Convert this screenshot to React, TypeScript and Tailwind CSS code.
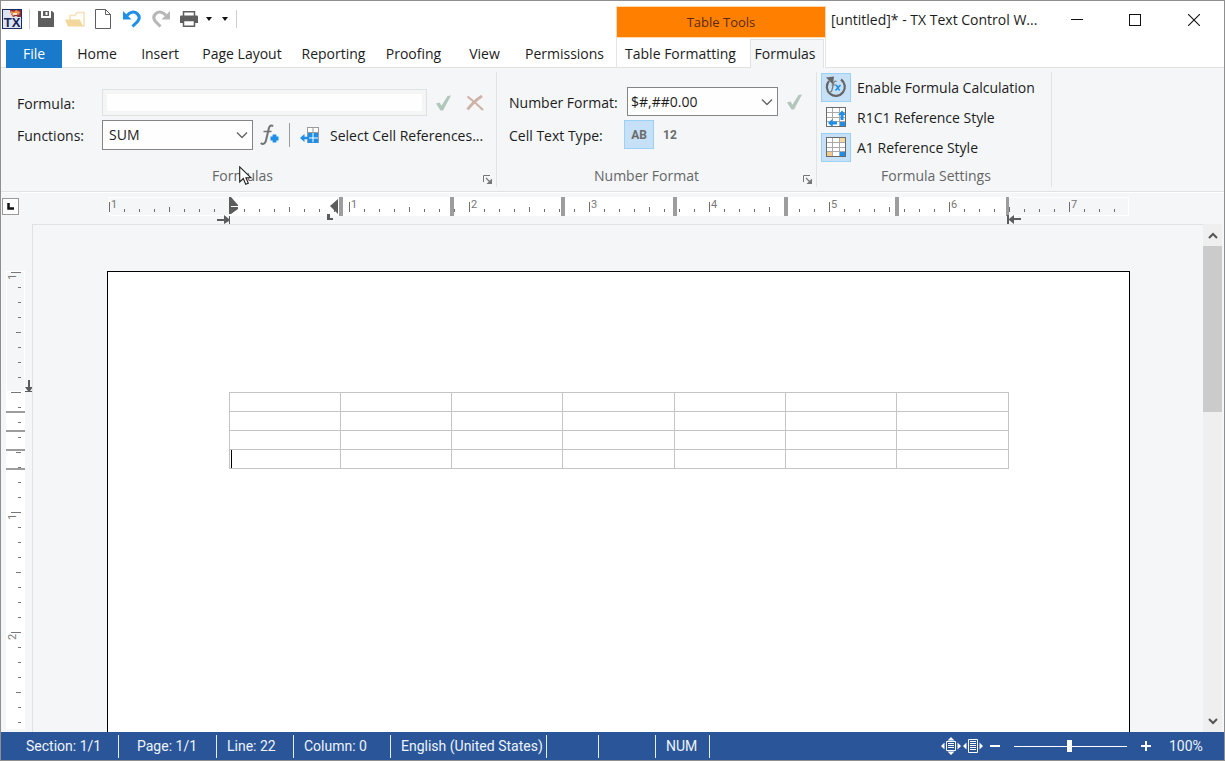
import type { ReactNode } from "react";

const INCH = 120;
const STEP = 15;

const TABS = [
  { label: "Home", width: "w-[62px]" },
  { label: "Insert", width: "w-[64px]" },
  { label: "Page Layout", width: "w-[100px]" },
  { label: "Reporting", width: "w-[83px]" },
  { label: "Proofing", width: "w-[77px]" },
  { label: "View", width: "w-[65px]" },
  { label: "Permissions", width: "w-[95px]" },
];

function AppLogo() {
  return (
    <svg width="20" height="20" viewBox="0 0 20 20" aria-label="TX">
      <rect x="0.5" y="0.5" width="19" height="19" fill="#dfe3ee" stroke="#1d2d63" />
      <path d="M8 1h11v7h-3l-2-1-3 1-2-3z" fill="#8b2f3a" />
      <path d="M9 2l3 1 2-2 4 2-1 3-3-1-3 2-2-2z" fill="#f0934a" />
      <path d="M11 4h4v2h-4z" fill="#fbe3c8" />
      <text x="10" y="18" textAnchor="middle" fontFamily="Liberation Sans, sans-serif" fontSize="13" fontWeight="700" fill="#14245c">TX</text>
    </svg>
  );
}

function SaveIcon() {
  return (
    <svg width="16" height="16" viewBox="0 0 16 16">
      <path d="M0 0h3v7h10V0h1l2 2v14H0z" fill="#5e5e5e" />
      <path d="M5 0h6v5H5z" fill="#5e5e5e" />
      <path d="M7.500 1h2v3h-2z" fill="#fff" />
      <path d="M0 7h16v9H0z" fill="#5e5e5e" />
    </svg>
  );
}

function FolderIcon() {
  return (
    <svg width="20" height="16" viewBox="0 0 20 16">
      <path d="M5 12V4.500h5l2-3h7V15h-2" fill="#fff" stroke="#f5e1ba" strokeWidth="1.600" />
      <path d="M0 8.500h15l3 7H3z" fill="#f3d79d" />
    </svg>
  );
}

function NewIcon() {
  return (
    <svg width="16" height="20" viewBox="0 0 16 20">
      <path d="M.5.5h10l5 5v14H.5z" fill="#fff" stroke="#5e5e5e" />
      <path d="M10.500.5v5h5" fill="none" stroke="#5e5e5e" />
    </svg>
  );
}

function UndoIcon({ color, flip }: { color: string; flip?: boolean }) {
  return (
    <svg width="18" height="18" viewBox="0 0 18 18">
      <g transform={flip ? "translate(18 0) scale(-1 1)" : undefined}>
        <path d="M4 5.500C7 2 11 1 14 3.500s2.500 5.500.5 8L9.500 16.500" fill="none" stroke={color} strokeWidth="3" />
        <path d="M0 1v8.500h8.500z" fill={color} />
      </g>
    </svg>
  );
}

function PrintIcon() {
  return (
    <svg width="18" height="16" viewBox="0 0 18 16">
      <path d="M3.500 5V.800h11V5" fill="#fff" stroke="#5e5e5e" strokeWidth="1.500" />
      <path d="M0 5.500q0-1 1-1h16q1 0 1 1V12H0z" fill="#5e5e5e" />
      <path d="M3.500 9.500h11v5.700h-11z" fill="#fff" stroke="#5e5e5e" strokeWidth="1.500" />
    </svg>
  );
}

function Caret() {
  return (
    <svg width="6" height="4" viewBox="0 0 6 4">
      <path d="M0 0h6L3 4z" fill="#111" />
    </svg>
  );
}

function CheckIcon() {
  return (
    <svg width="15" height="16" viewBox="0 0 15 16">
      <path d="M0 8.500l3.500-1 2 3.200L11.500 1l3.500-.5L7 15.500H4.500z" fill="#b3c6bc" />
    </svg>
  );
}

function CrossIcon() {
  return (
    <svg width="18" height="16" viewBox="0 0 18 16">
      <path d="M1.500 1.500Q10 8 17 15" fill="none" stroke="#cfb2a7" strokeWidth="2.200" />
      <path d="M16 1Q8 6 1.500 14.500" fill="none" stroke="#cfb2a7" strokeWidth="2.800" />
    </svg>
  );
}

function Chevron() {
  return (
    <svg width="12" height="7" viewBox="0 0 12 7" className="pointer-events-none absolute top-1/2 right-[5px] -translate-y-1/2">
      <path d="M1 1l5 5 5-5" fill="none" stroke="#666" strokeWidth="1.400" />
    </svg>
  );
}

function InsertFunctionIcon() {
  return (
    <svg width="20" height="22" viewBox="0 0 20 22">
      <path d="M13 2.500C11.500.5 9.500 1.500 8.800 4.500L6 16.500C5.300 19.500 3 21 .8 19" fill="none" stroke="#737373" strokeWidth="2" />
      <path d="M3.500 7.500h8" stroke="#737373" strokeWidth="1.500" />
      <path d="M14.500 10.500v8M10.500 14.500h8" stroke="#1e8fe8" strokeWidth="3.800" />
    </svg>
  );
}

function CellReferencesIcon() {
  return (
    <svg width="19" height="18" viewBox="0 0 19 18">
      <rect x="7.500" y="1.500" width="11" height="15" fill="#fff" stroke="#9b9b9b" />
      <path d="M13 1v6M7 6.500h12" stroke="#9b9b9b" />
      <path d="M8 7h4.500v4.500H8zM13.500 7H18v4.500h-4.500zM8 12.500h4.500V17H8zM13.500 12.500H18V17h-4.500z" fill="#1e8fe8" />
      <path d="M0 12l4.500-4v2.800H9v2.400H4.500V16z" fill="#1e8fe8" />
    </svg>
  );
}

function CalculationIcon() {
  return (
    <svg width="22" height="22" viewBox="0 0 22 22">
      <path d="M16 3.500A9 9 0 1 1 4 5" fill="none" stroke="#666" strokeWidth="2.200" />
      <path d="M1 1.500L9 .500 8 8.500z" fill="#666" />
      <path d="M11.500 5.500c-1.500-1-2.500 0-3 2L7 14c-.4 1.500-1 2-2 1.700M6.500 9h4" fill="none" stroke="#777" strokeWidth="1.200" />
      <path d="M10.500 9.500c2-1 2.300 5 4.500 4.500M15.500 9l-5 5.500" fill="none" stroke="#1e8fe8" strokeWidth="1.600" />
    </svg>
  );
}

function GridBase({ children }: { children: ReactNode }) {
  return (
    <svg width="20" height="20" viewBox="0 0 20 20">
      <rect x="0.500" y="0.500" width="19" height="19" fill="#fff" />
      {children}
      <path d="M6.500 1v18M13.500 1v18M1 5.500h18M1 10.500h18M1 14.500h18" stroke="#a9a9a9" />
      <rect x="0.500" y="0.500" width="19" height="19" fill="none" stroke="#6a6a6a" />
    </svg>
  );
}

function R1C1Icon() {
  return (
    <span className="relative flex">
      <GridBase>
        <rect x="14" y="15" width="5" height="4" fill="#1e8fe8" />
      </GridBase>
      <svg width="20" height="20" viewBox="0 0 20 20" className="absolute inset-0">
        <path d="M16 3.500l4 4.500h-2.500v5h-3V8H12z" fill="#1e8fe8" />
        <path d="M2 16l4.500-4v2.500H11v3H6.500V20z" fill="#1e8fe8" />
      </svg>
    </span>
  );
}

function A1Icon() {
  return (
    <GridBase>
      <rect x="14" y="1" width="5" height="4" fill="#f5d9a3" />
      <rect x="1" y="15" width="5" height="4" fill="#f2c98c" />
      <rect x="14" y="15" width="5" height="4" fill="#1e8fe8" />
    </GridBase>
  );
}

function LauncherButton({ label }: { label: string }) {
  return (
    <button type="button" aria-label={label} className="absolute right-1 bottom-[3px] flex">
      <svg width="9" height="9" viewBox="0 0 9 9">
        <path d="M.5 7V.5H7" fill="none" stroke="#777" />
        <path d="M3 3l3.500 3.500" stroke="#777" strokeWidth="1.200" />
        <path d="M9 3.500V9H3.500z" fill="#777" />
      </svg>
    </button>
  );
}

function RibbonGroup({
  title,
  launcher,
  className,
  titleClassName = "",
  children,
}: {
  title: string;
  launcher?: boolean;
  className: string;
  titleClassName?: string;
  children: ReactNode;
}) {
  return (
    <section aria-label={title} className={`relative flex shrink-0 flex-col border-r border-[#e1e3e5] ${className}`}>
      <div className="h-[92px] shrink-0">{children}</div>
      <h2 className={`text-center text-sm leading-6 text-[#666] ${titleClassName}`}>{title}</h2>
      {launcher && <LauncherButton label={`${title} options`} />}
    </section>
  );
}

function SettingRow({ label, pressed, icon }: { label: string; pressed: boolean; icon: ReactNode }) {
  return (
    <button type="button" aria-pressed={pressed} className="flex h-[30px] items-center gap-[6px] whitespace-nowrap">
      <span className={`flex h-[29px] w-[30px] items-center justify-center border ${pressed ? "border-[#99d1f7] bg-[#c5e0f7]" : "border-transparent"}`}>{icon}</span>
      <span className="pt-[2px]">{label}</span>
    </button>
  );
}

function HorizontalRuler() {
  const ticks = Array.from({ length: 68 }, (_, i) => i);
  const bars = [230, 341, 452, 564, 675, 786];
  return (
    <svg width="1020" height="28" viewBox="0 0 1020 28" className="shrink-0">
      <rect x="0.500" y="0.500" width="1019" height="18" fill="#f4f6f8" stroke="#fff" />
      <rect x="120" y="0" width="779" height="19" fill="#fff" />
      {ticks.map((i) => {
        const major = i % 8 === 0;
        const half = i % 8 === 4;
        const y = major ? 5 : half ? 10 : 12;
        return <rect key={i} x={i * STEP} y={y} width="1" height={15 - y} fill="#6e6e6e" />;
      })}
      {[1, 0, 1, 2, 3, 4, 5, 6, 7].map((n, i) =>
        n === 0 ? null : (
          <text key={i} x={i * INCH + 2} y="11" fontSize="11" fill="#777">
            {n}
          </text>
        ),
      )}
      {bars.map((x) => (
        <rect key={x} x={x} y="0" width="4" height="19" fill="#9d9d9d" />
      ))}
      <rect x="897" y="0" width="3" height="19" fill="#9d9d9d" />
      <path d="M120 0h2l7 8v4l-7 5h-2z" fill="#5c5c5c" />
      <path d="M122 9.500h8" stroke="#fff" />
      <path d="M221 9l8-7v15z" fill="#5c5c5c" />
      <path d="M218 17v6h6v-2h-3v-4z" fill="#5c5c5c" />
      <path d="M108 22h7v-4l5 4v-3h1v8h-1v-3l-5 3v-3h-7z" fill="#5c5c5c" />
      <path d="M898 18h2v4l5-4v3h7v2h-7v4l-5-4v4h-2z" fill="#5c5c5c" />
    </svg>
  );
}

function VerticalRuler() {
  const ticks = Array.from({ length: 31 }, (_, i) => i);
  return (
    <svg width="28" height="458" viewBox="0 0 28 458" className="ml-[5px]">
      <rect x="0" y="0" width="19" height="458" fill="#fff" />
      <rect x="1" y="1" width="17" height="119" fill="#f4f6f8" />
      {ticks.map((i) => {
        const width = i % 8 === 0 ? 10 : i % 8 === 4 ? 5 : 3;
        return <rect key={i} x={15 - width} y={i * STEP + 1} width={width} height="1" fill="#777" />;
      })}
      {[
        [1, 0],
        [1, 2],
        [2, 3],
      ].map(([n, at]) => (
        <text key={at} transform={`translate(10 ${at * INCH + 9}) rotate(-90)`} fontSize="11" fill="#777">
          {n}
        </text>
      ))}
      {[140, 159, 178, 197].map((y) => (
        <rect key={y} x="0" y={y} width="19" height="2" fill="#9d9d9d" />
      ))}
      <path d="M22 109h2v7h3l-3 4h3v1h-8v-1h3l-3-4h3z" fill="#5c5c5c" />
    </svg>
  );
}

function StatusCell({ className, children }: { className: string; children?: ReactNode }) {
  return <div className={`h-[23px] shrink-0 border-r border-[#e6edf7] leading-[23px] whitespace-nowrap ${className}`}>{children}</div>;
}

export default function App() {
  return (
    <div className="flex h-screen flex-col overflow-hidden border border-[#8f8f8f] bg-[#f4f6f8] font-['Open_Sans',sans-serif] text-sm text-[#1c1c1c]">
      <header className="flex shrink-0 bg-white">
        <div className="flex w-[615px] shrink-0 flex-col">
          <div className="flex h-[36px] items-center pl-[1px]">
            <AppLogo />
            <span className="ml-[7px] h-5 w-px bg-[#cfcfcf]" />
            <button type="button" aria-label="Save" className="ml-2"><SaveIcon /></button>
            <button type="button" aria-label="Open" className="ml-[11px]"><FolderIcon /></button>
            <button type="button" aria-label="New" className="ml-[10px]"><NewIcon /></button>
            <button type="button" aria-label="Undo" className="ml-3"><UndoIcon color="#1e8fe8" /></button>
            <button type="button" aria-label="Redo" className="ml-[11px]"><UndoIcon color="#b7b7b7" flip /></button>
            <button type="button" aria-label="Print" className="ml-[10px]"><PrintIcon /></button>
            <button type="button" aria-label="Print options" className="ml-2"><Caret /></button>
            <button type="button" aria-label="Customize toolbar" className="ml-[10px]"><Caret /></button>
            <span className="ml-2 h-[18px] w-px bg-[#cfcfcf]" />
          </div>
          <nav className="flex h-[31px] border-b border-[#dfe1e3] pt-[3px] pl-[5px] text-sm">
            <button type="button" className="mr-1 h-7 w-14 bg-[#1979ca] text-white">File</button>
            {TABS.map((tab) => (
              <button key={tab.label} type="button" className={`h-7 shrink-0 whitespace-nowrap ${tab.width}`}>
                {tab.label}
              </button>
            ))}
          </nav>
        </div>
        <div className="flex w-[210px] shrink-0 flex-col pt-[5px]">
          <div className="h-8 border border-[#ffd9b0] bg-[#ff8000] text-center text-[13px] leading-[31px] text-[#5a2a0a]">Table Tools</div>
          <nav className="flex h-[30px] border-x border-[#e3e5e7] pt-px">
            <button type="button" className="flex-1 border-b border-[#dfe1e3] pt-px pr-[6px] whitespace-nowrap">Table Formatting</button>
            <button type="button" aria-current="page" className="mr-px w-[74px] border border-b-0 border-[#dfe1e3] bg-[#f4f6f8] pr-1">Formulas</button>
          </nav>
        </div>
        <div className="flex min-w-0 flex-1 flex-col">
          <div className="flex h-[37px] items-center justify-between pl-[5px]">
            <h1 className="truncate">[untitled]* - TX Text Control W...</h1>
            <div className="flex shrink-0">
              <button type="button" aria-label="Minimize" className="flex h-[37px] w-[58px] items-center justify-center">
                <svg width="12" height="12" viewBox="0 0 12 12"><path d="M0 5.500h12" stroke="#111" /></svg>
              </button>
              <button type="button" aria-label="Maximize" className="flex h-[37px] w-[58px] items-center justify-center">
                <svg width="12" height="12" viewBox="0 0 12 12"><rect x="0.500" y="0.500" width="11" height="11" fill="none" stroke="#111" /></svg>
              </button>
              <button type="button" aria-label="Close" className="flex h-[37px] w-[60px] items-center justify-center">
                <svg width="12" height="12" viewBox="0 0 12 12"><path d="M0 0l12 12M12 0L0 12" stroke="#111" strokeWidth="1.100" /></svg>
              </button>
            </div>
          </div>
          <div className="h-[30px] border-b border-[#dfe1e3]" />
        </div>
      </header>

      <div className="relative flex h-[124px] shrink-0 border-b border-[#dfe1e3] pt-1 pb-1">
        <RibbonGroup title="Formulas" launcher className="w-[496px]" titleClassName="pr-3">
          <div className="flex items-center pt-[17px] pl-4">
            <label htmlFor="formula" className="w-[85px] pt-[2px]">Formula:</label>
            <input id="formula" type="text" className="h-[27px] w-[325px] border border-[#dfe2e2] bg-[#fefefe] px-2 ring-4 ring-[#f4f6f6] ring-inset" />
            <button type="button" aria-label="Apply formula" className="ml-[9px]"><CheckIcon /></button>
            <button type="button" aria-label="Discard formula" className="ml-[15px]"><CrossIcon /></button>
          </div>
          <div className="flex items-center pt-1 pl-4">
            <label htmlFor="function" className="w-[85px] pt-[2px]">Functions:</label>
            <span className="relative flex">
              <select id="function" className="h-[30px] w-[151px] appearance-none border border-[#858585] bg-[#fefefe] px-[6px]">
                <option>SUM</option>
              </select>
              <Chevron />
            </span>
            <button type="button" aria-label="Insert function" className="ml-[7px]"><InsertFunctionIcon /></button>
            <span className="ml-[9px] h-6 w-px bg-[#9b9b9b]" />
            <button type="button" className="ml-[10px] flex items-center gap-[11px] whitespace-nowrap">
              <CellReferencesIcon />
              <span className="pt-[2px]">Select Cell References...</span>
            </button>
          </div>
        </RibbonGroup>
        <RibbonGroup title="Number Format" launcher className="w-[320px] pl-3" titleClassName="pr-8">
          <div className="flex items-center pt-[15px]">
            <label htmlFor="format" className="w-[118px] pt-[2px] whitespace-nowrap">Number Format:</label>
            <span className="relative flex">
              <select id="format" className="h-[29px] w-[151px] appearance-none border border-[#858585] bg-[#fefefe] px-[3px]">
                <option>$#,##0.00</option>
              </select>
              <Chevron />
            </span>
            <button type="button" aria-label="Apply number format" className="ml-[9px]"><CheckIcon /></button>
          </div>
          <div className="flex items-center pt-1 text-sm">
            <span className="w-[115px] pt-[2px] whitespace-nowrap">Cell Text Type:</span>
            <button type="button" aria-pressed="true" className="h-[29px] w-[30px] border border-[#99d1f7] bg-[#c5e0f7] font-['Roboto',sans-serif] text-xs font-bold text-[#6b6b6b]">AB</button>
            <button type="button" aria-pressed="false" className="h-[29px] w-8 font-['Roboto',sans-serif] text-xs font-bold text-[#6b6b6b]">12</button>
          </div>
        </RibbonGroup>
        <RibbonGroup title="Formula Settings" className="w-[235px] pl-[4px]">
          <SettingRow label="Enable Formula Calculation" pressed icon={<CalculationIcon />} />
          <SettingRow label="R1C1 Reference Style" pressed={false} icon={<R1C1Icon />} />
          <SettingRow label="A1 Reference Style" pressed icon={<A1Icon />} />
        </RibbonGroup>
        <svg width="13" height="20" viewBox="0 0 13 20" className="pointer-events-none absolute top-[98px] left-[238px]">
          <path d="M.7.900v15l3.600-3.400 2.400 5.800 2.600-1.100-2.400-5.500h4.900z" fill="#fff" stroke="#222" strokeWidth="1.100" />
        </svg>
      </div>

      <div className="flex h-8 shrink-0 border-t border-white">
        <div className="w-8 shrink-0 pt-[5px] pl-[1px]">
          <button type="button" aria-label="Tab stop type" className="flex h-[17px] w-[17px] items-center justify-center border border-[#999] bg-white">
            <svg width="7" height="7" viewBox="0 0 7 7"><path d="M1.500 0v5.500H7" fill="none" stroke="#111" strokeWidth="2.500" /></svg>
          </button>
        </div>
        <div className="flex min-w-0 flex-1 justify-center pt-1 font-['Roboto',sans-serif]">
          <HorizontalRuler />
        </div>
        <div className="w-5 shrink-0" />
      </div>

      <main className="flex min-h-0 flex-1">
        <div className="w-[31px] shrink-0 overflow-hidden pt-[47px] font-['Roboto',sans-serif]">
          <VerticalRuler />
        </div>
        <div className="flex min-w-0 flex-1 justify-center overflow-hidden border-t border-l border-[#dfe1e3] pt-[46px]">
          <article className="h-[1320px] w-[1023px] shrink-0 border border-black bg-white px-[121px] pt-[120px]">
            <table className="w-[780px] table-fixed border-collapse">
              <tbody>
                {[0, 1, 2, 3].map((row) => (
                  <tr key={row}>
                    {[0, 1, 2, 3, 4, 5, 6].map((col) => (
                      <td key={col} className="h-[19px] border border-[#c4c4c4] p-0">
                        {row === 3 && col === 0 && <span className="ml-px block h-[18px] w-px bg-black" />}
                      </td>
                    ))}
                  </tr>
                ))}
              </tbody>
            </table>
          </article>
        </div>
        <div className="flex w-[21px] shrink-0 flex-col pr-[2px]">
          <div className="flex min-h-0 flex-1 flex-col bg-[#efefef]">
            <button type="button" aria-label="Scroll up" className="flex h-[22px] items-center justify-center">
              <svg width="10" height="7" viewBox="0 0 10 7"><path d="M1 6l4-4 4 4" fill="none" stroke="#555" strokeWidth="2" /></svg>
            </button>
            <div className="h-[166px] bg-[#cbcbcb]" />
            <button type="button" aria-label="Scroll down" className="mt-auto flex h-[22px] items-center justify-center">
              <svg width="10" height="7" viewBox="0 0 10 7"><path d="M1 1l4 4 4-4" fill="none" stroke="#555" strokeWidth="2" /></svg>
            </button>
          </div>
        </div>
      </main>

      <footer className="flex h-7 shrink-0 items-center bg-[#2a5699] font-['Roboto',sans-serif] text-sm text-[#eef3fa]">
        <StatusCell className="w-[118px] pl-[25px]">Section: 1/1</StatusCell>
        <StatusCell className="w-[98px] pl-[18px]">Page: 1/1</StatusCell>
        <StatusCell className="w-[77px] pl-[10px]">Line: 22</StatusCell>
        <StatusCell className="w-[97px] pl-[10px]">Column: 0</StatusCell>
        <StatusCell className="w-[156px] pl-[10px]">English (United States)</StatusCell>
        <StatusCell className="w-[52px]" />
        <StatusCell className="w-[57px]" />
        <StatusCell className="w-[54px] pl-[10px]">NUM</StatusCell>
        <div className="ml-auto flex items-center">
          <button type="button" aria-label="Fit page">
            <svg width="20" height="18" viewBox="0 0 20 18" fill="#fff">
              <path d="M10 0l3.500 3.500h-7zM10 18l3.500-3.500h-7zM0 9l3.500-3.500v7zM20 9l-3.500-3.500v7z" />
              <path d="M5.500 4.500h9v9h-9z" fill="none" stroke="#fff" />
              <path d="M7 6.500h6M7 8.500h6M7 10.500h6" stroke="#fff" />
            </svg>
          </button>
          <button type="button" aria-label="Fit width" className="ml-[2px]">
            <svg width="20" height="18" viewBox="0 0 20 18" fill="#fff">
              <path d="M0 9l3.500-3.500v7zM20 9l-3.500-3.500v7z" />
              <path d="M5.500 2.500h9v13h-9z" fill="none" stroke="#fff" />
              <path d="M7 4.500h6M7 6.500h6M7 8.500h6M7 10.500h6M7 12.500h6" stroke="#fff" />
            </svg>
          </button>
          <button type="button" aria-label="Zoom out" className="ml-[7px]">
            <svg width="10" height="10" viewBox="0 0 10 10"><path d="M0 5h10" stroke="#fff" strokeWidth="2" /></svg>
          </button>
          <input
            type="range"
            aria-label="Zoom"
            min="0"
            max="200"
            defaultValue="98"
            className="ml-[14px] h-4 w-[113px] appearance-none bg-transparent [&::-webkit-slider-runnable-track]:h-px [&::-webkit-slider-runnable-track]:bg-white [&::-webkit-slider-thumb]:-mt-[6px] [&::-webkit-slider-thumb]:h-3 [&::-webkit-slider-thumb]:w-[5px] [&::-webkit-slider-thumb]:appearance-none [&::-webkit-slider-thumb]:bg-white"
          />
          <button type="button" aria-label="Zoom in" className="ml-[14px]">
            <svg width="10" height="10" viewBox="0 0 10 10"><path d="M0 5h10M5 0v10" stroke="#fff" strokeWidth="2" /></svg>
          </button>
          <span className="ml-[18px] w-[55px]">100%</span>
        </div>
      </footer>
    </div>
  );
}
